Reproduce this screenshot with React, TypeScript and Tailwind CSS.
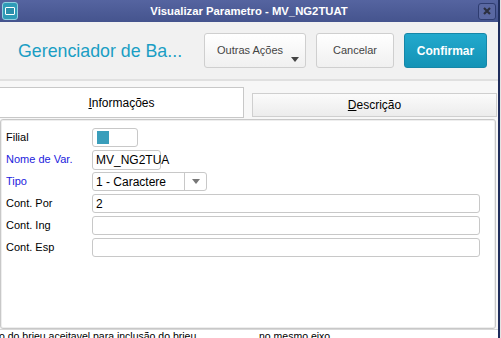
const font = { fontFamily: '"Liberation Sans", Arial, sans-serif' };

function Field({ className = '', children }: { className?: string; children?: React.ReactNode }) {
  return (
    <div
      className={`h-[19px] border border-[#c8c8c8] rounded-[3px] bg-white flex items-center px-[3px] text-[12px] text-black ${className}`}
    >
      {children}
    </div>
  );
}

function Row({ label, blue, children }: { label: string; blue?: boolean; children: React.ReactNode }) {
  return (
    <div className="flex items-center h-[19px]">
      <div className={`w-[86px] shrink-0 text-[11px] ${blue ? 'text-[#2222dd]' : 'text-black'}`}>{label}</div>
      {children}
    </div>
  );
}

export default function App() {
  return (
    <div className="w-[501px] h-[338px] overflow-hidden flex bg-white" style={font}>
      {/* Dialog */}
      <div className="w-[498px] flex flex-col shrink-0">
        {/* Title bar */}
        <div className="h-[22px] shrink-0 flex items-center bg-gradient-to-b from-[#5564a0] to-[#45548e]">
          <div className="ml-[2px] w-[16px] h-[18px] rounded-[3px] bg-[#2f9bb7] border border-[#8fd0e0] flex items-center justify-center">
            <div className="w-[10px] h-[8px] border border-white rounded-[1px] bg-[#2a8fab]" />
          </div>
          <div className="flex-1 text-center text-white font-bold text-[11.3px] pl-[2px]">
            Visualizar Parametro - MV_NG2TUAT
          </div>
          <div className="mr-[2px] w-[18px] h-[17px] rounded-[3px] border border-[#2e3c70] bg-[#5a68a2] flex items-center justify-center">
            <svg width="8" height="8" viewBox="0 0 8 8">
              <path d="M1 1 L7 7 M7 1 L1 7" stroke="#2b2f3f" strokeWidth="2.2" />
            </svg>
          </div>
        </div>

        {/* Header */}
        <div className="h-[59px] shrink-0 flex items-center bg-[#f1f1f1] border-b-2 border-[#e0e0e0] pl-[18px] pr-[11px]">
          <div className="flex-1 text-[17.8px] text-[#1a9ec4] pt-[1px]">Gerenciador de Ba...</div>
          <button className="w-[102px] h-[35px] rounded-[3px] border border-[#cfcfcf] bg-gradient-to-b from-white to-[#f0f0f0] text-[11px] text-[#444] relative mr-[10px] pl-[12px] text-left">
            Outras Ações
            <span className="absolute right-[6px] top-[23px] w-0 h-0 border-l-[4px] border-r-[4px] border-t-[5px] border-l-transparent border-r-transparent border-t-[#444]" />
          </button>
          <button className="w-[78px] h-[35px] rounded-[3px] border border-[#cfcfcf] bg-gradient-to-b from-white to-[#f0f0f0] text-[11px] text-[#444] mr-[10px]">
            Cancelar
          </button>
          <button className="w-[83px] h-[35px] rounded-[3px] border border-[#1687a8] bg-gradient-to-b from-[#22a9cd] to-[#1393b6] text-[12px] font-bold text-white">
            Confirmar
          </button>
        </div>

        {/* Tabs */}
        <div className="h-[37px] shrink-0 flex items-end bg-[#f7f7f7] pt-[6px]">
          <div className="w-[244px] h-[31px] bg-white border-t border-r border-b border-[#c8c8c8] flex items-center justify-center text-[12px] text-black">
            <span>
              <span className="underline">I</span>nformações
            </span>
          </div>
          <div className="ml-[8px] w-[245px] h-[24px] mb-[1px] bg-gradient-to-b from-[#fbfbfb] to-[#ececec] border border-[#cfcfcf] flex items-center justify-center text-[12px] text-black">
            <span>
              <span className="underline">D</span>escrição
            </span>
          </div>
        </div>

        {/* Panel */}
        <div className="h-[211px] shrink-0 bg-[#f7f7f7] pr-[2px] pt-[1px]">
          <div className="h-full border border-[#c8c8c8] rounded-[3px] bg-white pl-[5px] pt-[8px] flex flex-col gap-[3px] shadow-[inset_0_0_0_1px_#eeeeee]">
            <Row label="Filial">
              <Field className="w-[46px] !px-[4px]">
                <div className="w-[12px] h-[13px] bg-[#3a9ebb]" />
              </Field>
            </Row>
            <Row label="Nome de Var." blue>
              <Field className="w-[69px] !h-[20px]">MV_NG2TUA</Field>
            </Row>
            <Row label="Tipo" blue>
              <Field className="w-[115px] !pr-0">
                <span className="flex-1">1 - Caractere</span>
                <div className="w-[22px] h-full border-l border-[#c8c8c8] flex items-center justify-center">
                  <span className="w-0 h-0 border-l-[4px] border-r-[4px] border-t-[5px] border-l-transparent border-r-transparent border-t-[#777]" />
                </div>
              </Field>
            </Row>
            <Row label="Cont. Por">
              <Field className="w-[388px]">2</Field>
            </Row>
            <Row label="Cont. Ing">
              <Field className="w-[388px]" />
            </Row>
            <Row label="Cont. Esp">
              <Field className="w-[388px]" />
            </Row>
          </div>
        </div>

        {/* Underlying page text */}
        <div className="flex-1 overflow-hidden bg-white border-t border-[#d8d8d8]">
          <div className="flex text-[10.5px] leading-[11px] text-black whitespace-nowrap mt-[1px]">
            <span className="w-[260px] -ml-[1px]">o do brieu aceitavel para inclusão do brieu</span>
            <span>no mesmo eixo</span>
          </div>
        </div>
      </div>

      {/* Right window edge */}
      <div className="w-[2px] shrink-0 bg-[#1f2d5c]" />
      <div className="w-[1px] shrink-0 bg-[#e4e4e4]" />
    </div>
  );
}
